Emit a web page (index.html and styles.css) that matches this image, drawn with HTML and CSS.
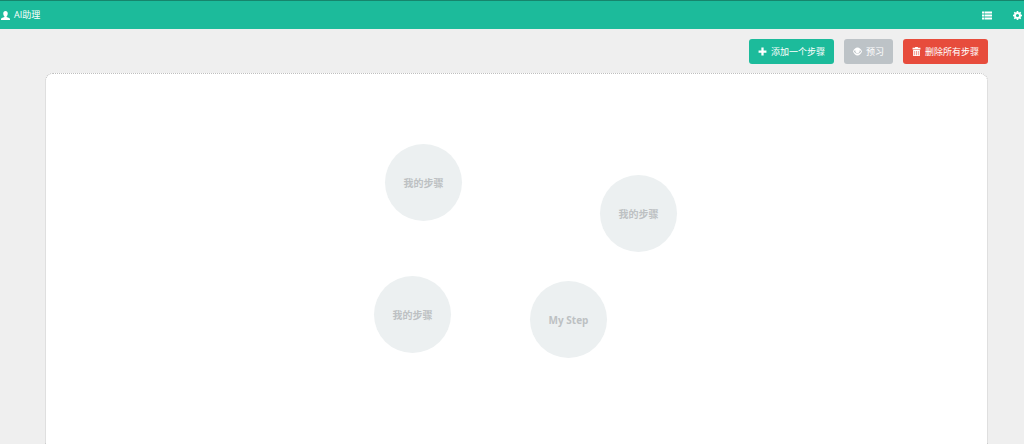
FILE: index.html
```html
<!DOCTYPE html>
<html lang="zh-CN">
<head>
<meta charset="utf-8">
<title>AI助理</title>
<meta name="viewport" content="width=device-width, initial-scale=1">
<link rel="stylesheet" href="styles.css">
</head>
<body>
<header class="navbar">
  <a class="brand" href="#">
    <svg class="icon" viewBox="0 0 16 16" aria-hidden="true"><path d="M8 0C5.400 0 4 1.900 4 4.300c0 2.100.8 4 2 5v1.300L1.600 12.400C.5 12.900 0 13.500 0 14.400V16h16v-1.600c0-.9-.5-1.500-1.600-2L10 10.600V9.300c1.200-1 2-2.900 2-5C12 1.900 10.600 0 8 0z"/></svg>
    <span>AI助理</span>
  </a>
  <nav class="tools">
    <button class="tool" type="button" aria-label="列表">
      <svg class="icon icon-list" viewBox="0 0 20 18" aria-hidden="true"><path d="M0 1h4v4H0zM5 1h15v4H5zM0 7h4v4H0zM5 7h15v4H5zM0 13h4v4H0zM5 13h15v4H5z"/></svg>
    </button>
    <button class="tool" type="button" aria-label="设置">
      <svg class="icon" viewBox="0 0 16 16" aria-hidden="true"><path fill-rule="evenodd" d="M6.700 0h2.600l.4 2.100 1.300.6 1.800-1.200 1.800 1.800-1.200 1.800.5 1.200 2.100.4v2.600l-2.100.4-.5 1.200 1.200 1.800-1.800 1.800-1.800-1.200-1.300.6L9.300 16H6.700l-.4-2.100-1.300-.6-1.800 1.200-1.800-1.800 1.200-1.800-.5-1.200L0 9.300V6.700l2.100-.4.500-1.200-1.200-1.800 1.800-1.800L5 2.700l1.300-.6zM8 5.200a2.800 2.800 0 1 0 0 5.600 2.800 2.800 0 0 0 0-5.600z"/></svg>
    </button>
  </nav>
</header>
<main class="page">
  <div class="actions">
    <button class="btn btn-add" type="button">
      <svg class="icon" viewBox="0 0 16 16" aria-hidden="true"><path d="M6 1h4v5h5v4h-5v5H6v-5H1V6h5z"/></svg>
      <span>添加一个步骤</span>
    </button>
    <button class="btn btn-preview" type="button">
      <svg class="icon" viewBox="0 0 16 16" aria-hidden="true"><path fill-rule="evenodd" d="M8 1C4.500 1 1.500 4 0 8c1.500 4 4.500 7 8 7s6.500-3 8-7c-1.500-4-4.500-7-8-7zM4 5.500C3.600 9 5.500 11 8 11s4.400-2 4-5.500C13.200 6.200 14 7 14.500 8c-1.300 2.200-3.700 4-6.500 4S2.800 10.200 1.500 8C2 7 2.800 6.200 4 5.500z"/></svg>
      <span>预习</span>
    </button>
    <button class="btn btn-delete" type="button">
      <svg class="icon" viewBox="0 0 16 16" aria-hidden="true"><path fill-rule="evenodd" d="M5.500 0h5v1.500H15v3H1v-3h4.500zM2 5.500h12V16H2zM4.500 7v7.500h1V7zM7.500 7v7.500h1V7zM10.500 7v7.500h1V7z"/></svg>
      <span>删除所有步骤</span>
    </button>
  </div>
  <section class="canvas">
    <div class="step step-1">我的步骤</div>
    <div class="step step-2">我的步骤</div>
    <div class="step step-3">我的步骤</div>
    <div class="step step-4">My Step</div>
  </section>
</main>
</body>
</html>
```
FILE: styles.css
```css
* {
  box-sizing: border-box;
}

body {
  display: flex;
  flex-direction: column;
  height: 100vh;
  margin: 0;
  overflow: hidden;
  background: #efefef;
  font-family: "Open Sans", "Noto Sans CJK SC", sans-serif;
  font-size: 9px;
  line-height: 12px;
}

button {
  border: 0;
  font: inherit;
  color: inherit;
  cursor: pointer;
}

.icon {
  width: 9px;
  height: 9px;
  flex: none;
  fill: currentColor;
}

.icon-list {
  width: 10px;
}

.navbar {
  display: flex;
  align-items: center;
  justify-content: space-between;
  height: 29px;
  padding: 0 2px 0 1px;
  border-top: 1px solid #16856c;
  background: #1cbb9b;
  color: #fff;
}

.brand {
  display: flex;
  align-items: center;
  gap: 4px;
  color: inherit;
  text-decoration: none;
}

.tools {
  display: flex;
  gap: 21px;
}

.tool {
  display: flex;
  padding: 0;
  background: none;
}

.page {
  display: flex;
  flex: 1;
  flex-direction: column;
  gap: 9px;
  padding: 10px 36px 0 45px;
}

.actions {
  display: flex;
  justify-content: flex-end;
  gap: 10px;
}

.btn {
  display: flex;
  align-items: center;
  gap: 4px;
  height: 25px;
  padding: 0 9px;
  border-radius: 3px;
  color: #fff;
}

.btn-add {
  background: #1cbb9b;
}

.btn-preview {
  background: #bdc3c7;
}

.btn-delete {
  background: #e74c3c;
}

.canvas {
  position: relative;
  flex: 1;
  border: 1px dotted #bfbfbf;
  border-bottom: 0;
  border-radius: 8px 8px 0 0;
  background: #fff;
}

.step {
  position: absolute;
  display: flex;
  align-items: center;
  justify-content: center;
  width: 77px;
  height: 77px;
  border-radius: 50%;
  background: #ecf0f1;
  color: #bdc1c3;
  font-size: 10px;
  font-weight: 700;
}

.step-1 {
  top: 70px;
  left: 339px;
}

.step-2 {
  top: 101px;
  left: 554px;
}

.step-3 {
  top: 202px;
  left: 328px;
}

.step-4 {
  top: 207px;
  left: 484px;
}
```
